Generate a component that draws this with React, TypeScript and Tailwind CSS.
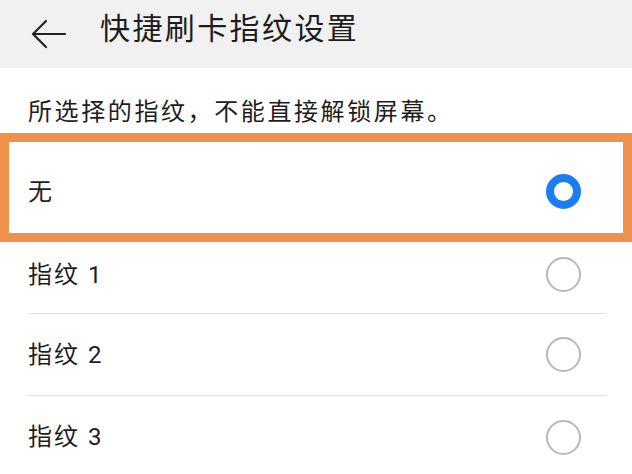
const items = ["指纹 1", "指纹 2", "指纹 3"];

const font = { fontFamily: 'Roboto, "Noto Sans CJK SC", "Noto Sans", sans-serif' };

const BackArrow = () => (
  <svg width="36" height="30" viewBox="0 0 36 30" fill="none" stroke="#222" strokeWidth="2.2" strokeLinecap="round" strokeLinejoin="round">
    <path d="M34 15H3" />
    <path d="M15 2L2 15l13 13" />
  </svg>
);

const Radio = ({ checked }: { checked?: boolean }) =>
  checked ? (
    <div className="w-[35px] h-[35px] rounded-full border-[8px] border-[#1a7ef0] bg-white" />
  ) : (
    <div className="w-[35px] h-[35px] rounded-full border-2 border-[#b8b8b8] bg-white" />
  );

export default function App() {
  return (
    <div className="w-[632px] h-[474px] overflow-hidden bg-white text-[#1d1d1d]" style={font}>
      {/* header */}
      <div className="h-[68px] bg-[#f1f1f1] flex items-center pl-[31px]">
        <BackArrow />
        <span className="ml-[33px] text-[30px] tracking-[2.4px] leading-none -mt-[10px]">快捷刷卡指纹设置</span>
      </div>

      <div className="h-[65px] flex items-end pb-[9px] pl-[28px]">
        <span className="text-[24px] tracking-[2.6px] leading-none">所选择的指纹，不能直接解锁屏幕。</span>
      </div>

      {/* selected option */}
      <div className="h-[109px] border-[9px] border-[#f0914b] flex items-center justify-between pl-[19px] pr-[42px] pt-[8px]">
        <span className="text-[24px] leading-none">无</span>
        <Radio checked />
      </div>

      {items.map((label, i) => (
        <div key={label} className={i === 0 ? "h-[72px]" : "h-[82px]"}>
          <div
            className={`h-full mx-[27px] mr-[25px] flex items-center justify-between ${i === 0 ? "pb-[6px]" : ""} ${
              i < items.length - 1 ? "border-b border-[#e2e2e2]" : ""
            }`}
          >
            <span className="pl-[1px] text-[24px] tracking-[2px] leading-none">{label}</span>
            <div className="mr-[26px]">
              <Radio />
            </div>
          </div>
        </div>
      ))}
    </div>
  );
}
